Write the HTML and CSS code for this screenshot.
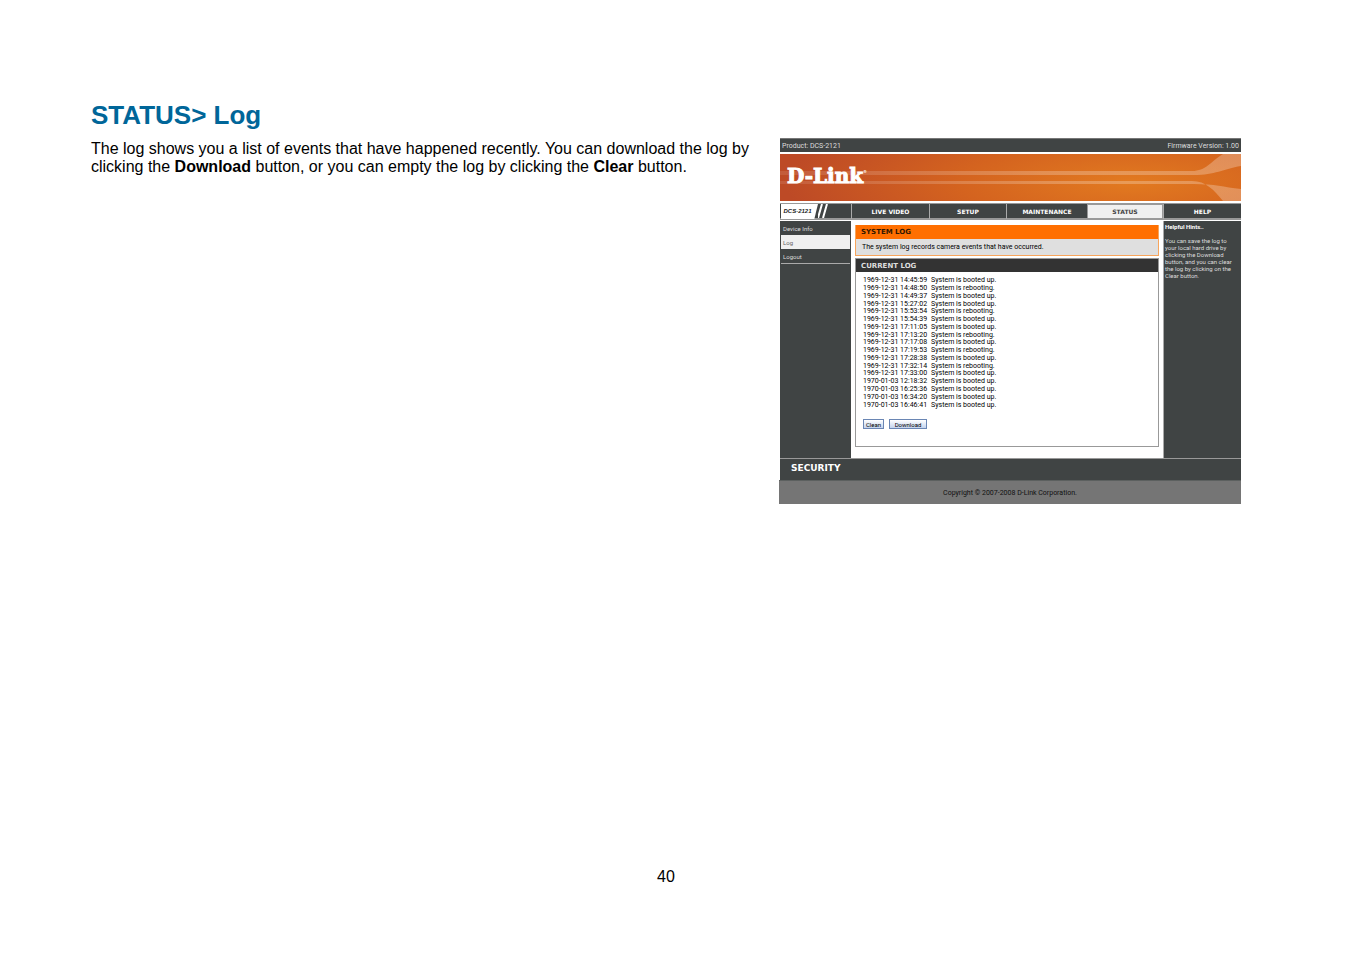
FILE: index.html
```html
<!DOCTYPE html>
<html lang="en">
<head>
  <meta charset="UTF-8" />
  <meta name="viewport" content="width=device-width, initial-scale=1.0" />
  <title>STATUS&gt; Log</title>
  <link rel="stylesheet" href="styles.css">
</head>
<body>
  <main class="page">
    <section class="text">
      <h1>STATUS&gt; Log</h1>
      <p>The log shows you a list of events that have happened recently. You can download the log by clicking the <strong>Download</strong> button, or you can empty the log by clicking the <strong>Clear</strong> button.</p>
    </section>

    <section class="camera">
      <div class="topbar">
        <span>Product: DCS-2121</span>
        <span>Firmware Version: 1.00</span>
      </div>

      <div class="banner">
        <svg class="swoosh" viewBox="0 0 461 47" preserveAspectRatio="none" aria-hidden="true">
          <defs>
            <linearGradient id="fade">
              <stop offset="0" stop-color="#fff" stop-opacity="0.1" />
              <stop offset="0.6" stop-color="#fff" stop-opacity="0.24" />
              <stop offset="1" stop-color="#fff" stop-opacity="0.26" />
            </linearGradient>
          </defs>
          <path fill="url(#fade)" d="M0 17H412C426 17 430 8 443 0H461V12C443 15 435 21 414 21H0Z" />
          <path fill="url(#fade)" d="M0 27H412C426 27 434 36 443 47H461V35C443 33 435 30 414 30H0Z" />
        </svg>
        <span class="logo">D-Link<sup>®</sup></span>
      </div>

      <nav class="tabs">
        <div class="model">
          <span>DCS-2121</span>
          <svg viewBox="0 0 14 14" aria-hidden="true"><path d="M0 14L4 0M5 14L9 0" /></svg>
        </div>
        <a href="#">LIVE VIDEO</a>
        <a href="#">SETUP</a>
        <a href="#">MAINTENANCE</a>
        <a class="active" href="#">STATUS</a>
        <a href="#">HELP</a>
      </nav>

      <div class="middle">
        <nav class="side">
          <a href="#">Device Info</a>
          <a class="active" href="#">Log</a>
          <a href="#">Logout</a>
        </nav>

        <div class="content">
          <div class="box intro">
            <h2>SYSTEM LOG</h2>
            <p>The system log records camera events that have occurred.</p>
          </div>
          <div class="box current">
            <h2>CURRENT LOG</h2>
            <table class="log">
              <tr><td>1969-12-31 14:45:59</td><td>System is booted up.</td></tr>
              <tr><td>1969-12-31 14:48:50</td><td>System is rebooting.</td></tr>
              <tr><td>1969-12-31 14:49:37</td><td>System is booted up.</td></tr>
              <tr><td>1969-12-31 15:27:02</td><td>System is booted up.</td></tr>
              <tr><td>1969-12-31 15:53:54</td><td>System is rebooting.</td></tr>
              <tr><td>1969-12-31 15:54:39</td><td>System is booted up.</td></tr>
              <tr><td>1969-12-31 17:11:05</td><td>System is booted up.</td></tr>
              <tr><td>1969-12-31 17:13:20</td><td>System is rebooting.</td></tr>
              <tr><td>1969-12-31 17:17:08</td><td>System is booted up.</td></tr>
              <tr><td>1969-12-31 17:19:53</td><td>System is rebooting.</td></tr>
              <tr><td>1969-12-31 17:28:38</td><td>System is booted up.</td></tr>
              <tr><td>1969-12-31 17:32:14</td><td>System is rebooting.</td></tr>
              <tr><td>1969-12-31 17:33:00</td><td>System is booted up.</td></tr>
              <tr><td>1970-01-03 12:18:32</td><td>System is booted up.</td></tr>
              <tr><td>1970-01-03 16:25:36</td><td>System is booted up.</td></tr>
              <tr><td>1970-01-03 16:34:20</td><td>System is booted up.</td></tr>
              <tr><td>1970-01-03 16:46:41</td><td>System is booted up.</td></tr>
            </table>
            <div class="buttons">
              <button type="button">Clean</button>
              <button type="button" class="download">Download</button>
            </div>
          </div>
        </div>

        <aside class="hints">
          <strong>Helpful Hints..</strong>
          <p>You can save the log to<br>your local hard drive by<br>clicking the Download<br>button, and you can clear<br>the log by clicking on the<br>Clear button.</p>
        </aside>
      </div>

      <div class="security">SECURITY</div>
      <div class="copyright">Copyright © 2007-2008 D-Link Corporation.</div>
    </section>
  </main>

  <footer>40</footer>
</body>
</html>
```

FILE: styles.css
```css
* {
  box-sizing: border-box;
}
body {
  margin: 0;
  min-height: 100vh;
  padding: 100px 110px 68px 91px;
  display: flex;
  flex-direction: column;
  justify-content: space-between;
  background: #fff;
  color: #000;
  font: 16px/18px "Liberation Sans", Arial, sans-serif;
}
a {
  color: inherit;
  text-decoration: none;
}
h1, h2, p {
  margin: 0;
}
.page {
  display: grid;
  grid-template-columns: 10fr 7fr;
  gap: 28px;
  align-items: start;
}
h1 {
  margin-bottom: 10px;
  color: #006699;
  font-size: 26px;
  line-height: 30px;
}
footer {
  text-align: center;
}

/* camera web page */
.camera {
  margin-top: 38px;
  font: 7px/7px Roboto, Tahoma, sans-serif;
}
.topbar,
.banner,
.tabs,
.middle,
.security {
  margin-left: 1px;
}
.topbar {
  display: flex;
  justify-content: space-between;
  height: 14px;
  padding: 0 2px;
  border-top: 1px solid #777;
  background: #404444;
  color: #ddd;
  line-height: 14px;
}
.banner {
  position: relative;
  height: 47px;
  margin-top: 2px;
  padding: 10px 7px;
  background: radial-gradient(ellipse 75% 170% at 76% 60%, #e27a20 0%, #d4631f 50%, #bd4a26 100%);
}
.swoosh {
  position: absolute;
  top: 0;
  left: 0;
  width: 100%;
  height: 100%;
}
.logo {
  position: relative;
  color: #fff;
  font: bold 20px/24px "DejaVu Serif", serif;
  -webkit-text-stroke: 1px #fff;
}
.logo sup {
  font-size: 4px;
  line-height: 4px;
  vertical-align: 10px;
  -webkit-text-stroke: 0;
}

.tabs {
  display: grid;
  grid-template-columns: 71fr 78fr 77fr 81fr 76fr 78fr;
  margin-top: 2px;
  height: 17px;
  border-top: 1px solid #999;
  border-bottom: 2px solid #999;
  background: #404444;
  color: #fff;
  font: bold 6px/15px "DejaVu Sans", Verdana, sans-serif;
  text-align: center;
}
.tabs a {
  border-left: 1px solid #aaa;
}
.tabs .active {
  border: 1px solid #999;
  background: #f0f0f0;
  color: #444;
  line-height: 13px;
}
.model {
  display: flex;
}
.model span {
  width: 37px;
  margin-left: 1px;
  padding-right: 4px;
  background: #fff;
  clip-path: polygon(0 0, 100% 0, 90% 100%, 0 100%);
  color: #222;
  font: italic bold 6px/15px "Liberation Sans", Arial, sans-serif;
}
.model svg {
  width: 14px;
  height: 14px;
  fill: none;
  stroke: #fff;
  stroke-width: 2;
}

.middle {
  display: grid;
  grid-template-columns: 71fr 312fr 78fr;
  margin-top: 1px;
  height: 238px;
  border-bottom: 1px solid #999;
}
.side {
  background: #404444;
  color: #ddd;
}
.side a {
  display: block;
  height: 14px;
  margin: 0 1px;
  padding-left: 2px;
  font-size: 6px;
  line-height: 16px;
}
.side .active {
  background: #f0f0f0;
  color: #666;
}
.side a:last-child {
  height: 15px;
  border-bottom: 1px solid #aaa;
}
.content {
  padding: 4px 4px 11px;
  display: flex;
  flex-direction: column;
  gap: 2px;
}
.box h2 {
  padding-left: 5px;
  font: bold 7px/15px "DejaVu Sans", Verdana, sans-serif;
}
.intro {
  border: 1px solid #f7a55c;
  border-top: 0;
  background: #dfdfdf;
}
.intro h2 {
  height: 14px;
  background: #ff6f00;
  color: #331800;
}
.intro p {
  padding-left: 6px;
  line-height: 16px;
}
.current {
  flex: 1;
  border: 1px solid #999;
}
.current h2 {
  height: 13px;
  background: #333;
  color: #ddd;
}
.log {
  height: 132px;
  margin: 5px 7px 10px;
  border-collapse: collapse;
  line-height: 7px;
}
.log td {
  padding: 0 4px 0 0;
}
.buttons {
  display: flex;
  gap: 5px;
  padding-left: 7px;
}
button {
  width: 21px;
  height: 10px;
  padding: 0;
  border: 1px solid #6a86b4;
  background: linear-gradient(#fff, #c3d3ee);
  color: #000;
  font: 6px/7px Roboto, Tahoma, sans-serif;
}
.download {
  width: 38px;
}
.hints {
  padding: 2px 1px;
  border-left: 1px solid #aaa;
  background: #404444;
  color: #ddd;
  font-size: 6px;
  white-space: nowrap;
}
.hints strong {
  color: #fff;
}
.hints p {
  margin-top: 7px;
}
.security {
  height: 21px;
  padding-left: 11px;
  background: #404444;
  color: #fff;
  font: bold 9px/19px "DejaVu Sans", Verdana, sans-serif;
}
.copyright {
  height: 24px;
  border-top: 1px solid #5c605f;
  background: #757575;
  color: #111;
  text-align: center;
  line-height: 24px;
}
```
